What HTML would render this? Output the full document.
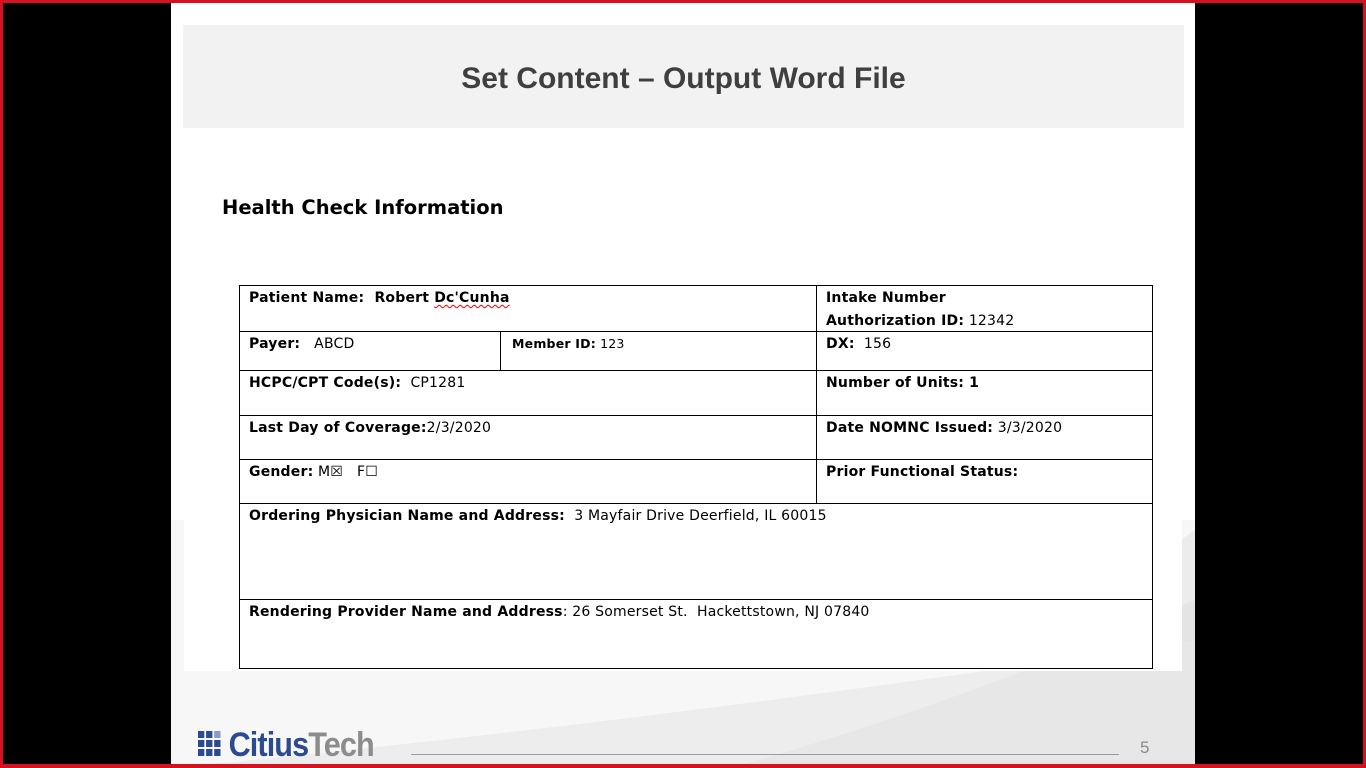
<!DOCTYPE html>
<html><head><meta charset="utf-8">
<style>
*{margin:0;padding:0;box-sizing:border-box}
html,body{width:1366px;height:768px;overflow:hidden;background:#000}
#frame{position:absolute;left:0;top:0;width:1366px;height:768px;border:3px solid #d6121f;border-bottom-width:4px;z-index:10;pointer-events:none}
#slide{position:absolute;left:171px;top:0;width:1024px;height:768px;background:#fff;overflow:hidden}
#title{position:absolute;left:12px;top:25px;width:1001px;height:103px;background:#f2f2f2;text-align:center;font:bold 30px "Liberation Sans",sans-serif;color:#3f3f3f;line-height:108px}
.bg{position:absolute;left:0;top:0}
#doc{position:absolute;left:13px;top:150px;width:998px;height:521px;background:#fff}
h2{position:absolute;left:51px;top:196px;font:bold 19.5px "DejaVu Sans",sans-serif;color:#000}
.c{position:absolute;border:1px solid #000;font:14px "DejaVu Sans",sans-serif;letter-spacing:0.2px;color:#000;padding:1px 9px;line-height:23px}
b{font-weight:bold}
.sq{text-decoration:underline wavy #e00;text-underline-offset:2px;text-decoration-thickness:1px}
#logo{position:absolute;left:27px;top:726px;font:bold 34px "Liberation Sans",sans-serif;letter-spacing:-1px;transform:scaleX(0.9);transform-origin:left}
#line{position:absolute;left:240px;top:754px;width:708px;height:1px;background:#9a9a9a}
#num{position:absolute;left:969px;top:738px;font:17px "Liberation Sans",sans-serif;color:#888}
</style></head><body>
<div id="slide">
<svg class="bg" width="1024" height="768">
<rect x="0" y="520" width="1024" height="248" fill="#f7f7f7"/>
<path d="M1010 540 L1024 530 L1024 768 L1010 768Z" fill="#ececec"/>
<path d="M560 768 Q800 700 1024 600 L1024 768 Z" fill="#e4e4e4"/>
<path d="M0 768 Q500 720 1024 640 L1024 768Z" fill="#e8e8e8" opacity="0.7"/>
</svg>
<div id="title">Set Content – Output Word File</div>
<div id="doc"></div>
<h2>Health Check Information</h2>
<div id="logo"><svg width="26" height="26" style="vertical-align:-1px;margin-right:8px"><g fill="#2c4a8f"><rect x="0" y="0" width="7" height="7"/><rect x="9" y="0" width="7" height="7"/><rect x="18" y="0" width="7" height="7" fill="#8a9ac0"/><rect x="0" y="9" width="7" height="7"/><rect x="9" y="9" width="7" height="7"/><rect x="18" y="9" width="7" height="7"/><rect x="0" y="18" width="7" height="7"/><rect x="9" y="18" width="7" height="7"/><rect x="18" y="18" width="7" height="7"/></g></svg><span style="color:#2c4a8f">Citius</span><span style="color:#8c8c8c">Tech</span></div>
<div id="line"></div>
<div id="num">5</div>
</div>
<div style="position:absolute;left:0;top:0">
<div class="c" style="left:239px;top:285px;width:578px;height:47px"><b>Patient Name:&nbsp; Robert <span class="sq">Dc'Cunha</span></b></div>
<div class="c" style="left:816px;top:285px;width:337px;height:47px"><b>Intake Number</b><br><b>Authorization ID:</b> 12342</div>
<div class="c" style="left:239px;top:331px;width:262px;height:40px"><b>Payer:</b>&nbsp;&nbsp; ABCD</div>
<div class="c" style="left:500px;top:331px;width:317px;height:40px;font-size:12.5px;padding-left:11px;line-height:22px"><b>Member ID:</b> 123</div>
<div class="c" style="left:816px;top:331px;width:337px;height:40px"><b>DX:</b>&nbsp; 156</div>
<div class="c" style="left:239px;top:370px;width:578px;height:46px"><b>HCPC/CPT Code(s):</b>&nbsp; CP1281</div>
<div class="c" style="left:816px;top:370px;width:337px;height:46px"><b>Number of Units: 1</b></div>
<div class="c" style="left:239px;top:415px;width:578px;height:45px"><b>Last Day of Coverage:</b>2/3/2020</div>
<div class="c" style="left:816px;top:415px;width:337px;height:45px"><b>Date NOMNC Issued:</b> 3/3/2020</div>
<div class="c" style="left:239px;top:459px;width:578px;height:45px"><b>Gender:</b> M☒&nbsp;&nbsp; F☐</div>
<div class="c" style="left:816px;top:459px;width:337px;height:45px"><b>Prior Functional Status:</b></div>
<div class="c" style="left:239px;top:503px;width:914px;height:97px"><b>Ordering Physician Name and Address:</b>&nbsp; 3 Mayfair Drive Deerfield, IL 60015</div>
<div class="c" style="left:239px;top:599px;width:914px;height:70px"><b>Rendering Provider Name and Address</b>: 26 Somerset St.&nbsp; Hackettstown, NJ 07840</div>
</div>
<div id="frame"></div>
</body></html>
